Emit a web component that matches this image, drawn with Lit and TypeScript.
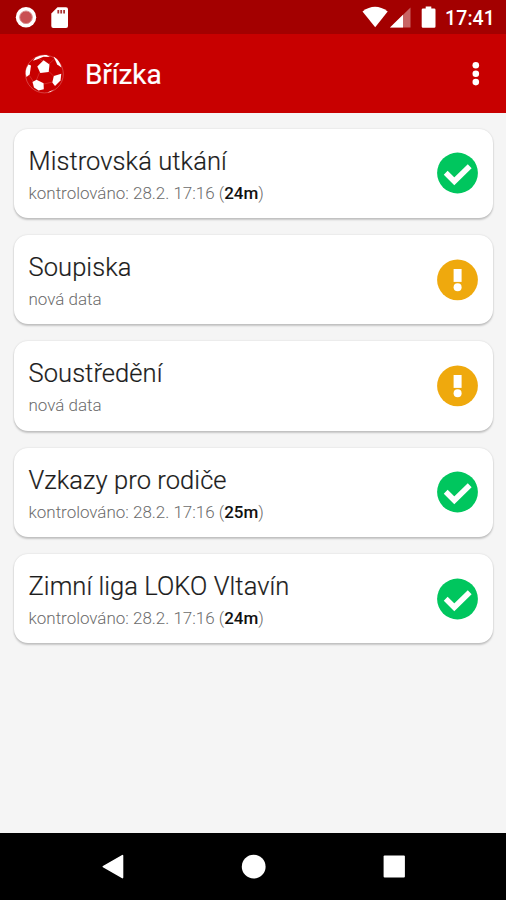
import { LitElement, html, css, svg } from "lit";
import { customElement, property } from "lit/decorators.js";

@customElement("status-bar")
class StatusBar extends LitElement {
  static styles = css`
    :host { display: flex; align-items: center; box-sizing: border-box; height: 34px; background: #a30000; color: #fff; padding-right: 11px; }
    svg { display: block; flex: 1; height: 34px; }
    .time { font: 500 19.5px/34px Roboto, sans-serif; letter-spacing: 0.1px; padding-top: 3px; }
  `;
  render() {
    return html`
      <svg viewBox="0 0 445 34" preserveAspectRatio="xMinYMin meet" fill="#fff">
        <circle cx="26" cy="17.3" r="10.2" />
        <circle cx="26" cy="17.3" r="6.3" fill="#c94f52" stroke="#dc8f90" stroke-width="1" />
        <path d="M57.5 7.3H66a2 2 0 0 1 2 2V26a2 2 0 0 1-2 2H53.3a2 2 0 0 1-2-2V13.5Z" />
        <path d="M57.4 10h1.8v3.6h-1.8zM60.3 10h1.8v3.6h-1.8zM63.2 10H65v3.6h-1.8z" fill="#a33" />
        <path d="M362.5 11.5Q375 2.2 387.7 11.5L375.2 27.3Z" />
        <path d="M410.5 7.5V27.5H390Z" fill="#c86464" />
        <path d="M403 14.8V27.5H390Z" />
        <path d="M425.7 6.5h5.6v2h2.9a1.3 1.3 0 0 1 1.3 1.3v16.6a1.3 1.3 0 0 1-1.3 1.3h-11.2a1.3 1.3 0 0 1-1.3-1.3V9.8A1.3 1.3 0 0 1 423 8.5h2.7z" />
      </svg>
      <span class="time">17:41</span>
    `;
  }
}

@customElement("app-header")
class AppHeader extends LitElement {
  @property() heading = "";
  static styles = css`
    :host { display: flex; align-items: center; box-sizing: border-box; height: 79px; background: #c80000; color: #fff; padding: 0 24px; }
    .ball { width: 40px; height: 40px; display: block; }
    .title { flex: 1; margin: 2px 0 0 21px; font: 400 28px/34px Roboto, sans-serif; letter-spacing: -0.1px; -webkit-text-stroke: 0.2px #fff; }
    .more { width: 12px; height: 26px; display: block; }
  `;
  render() {
    return html`
      <svg class="ball" viewBox="24 54 40 40">
        <circle cx="44.4" cy="74" r="18.9" fill="none" stroke="#e06a6a" stroke-width=".6" />
        <path d="M43.5 61.5L37.5 58M49 64L54.5 59M49 71.5L53.500 76M39.500 72.500L36.500 80M29.500 75.500L33.500 82M44 84L52.500 82" fill="none" stroke="#d84444" stroke-width=".6" />
        <g fill="#fff">
          <path d="M43.6 60.3L49.5 64.6 48.7 72 40.3 73 37.3 66.5Z" />
          <path d="M35.5 57.6Q40 54.5 46.5 55L50 57 43.5 56.7 37.5 59.2 33 60.800Z" />
          <path d="M53.5 56.5Q59.5 60 61.500 67.500L57.200 64.500Z" />
          <path d="M28.500 64.500L31 65.500 29.700 74.500 26.500 77Q24.200 70.500 28.500 64.500Z" />
          <path d="M53.800 76L61.300 73.800 60.500 80.500 55 86 52.300 82.500Z" />
          <path d="M32.500 82L36.500 79.800 43.600 83.300 43.800 89.300 38.500 90.500 34 87.500Z" />
          <path d="M47.500 92.500L54 89.500 50.500 92Z" />
        </g>
      </svg>
      <span class="title">${this.heading}</span>
      <svg class="more" viewBox="0 0 12 26" fill="#fff">
        <circle cx="5.800" cy="4.300" r="3.300" /><circle cx="5.800" cy="12.700" r="3.300" /><circle cx="5.800" cy="21.100" r="3.300" />
      </svg>
    `;
  }
}

@customElement("status-icon")
class StatusIcon extends LitElement {
  @property() kind: "ok" | "new" = "ok";
  static styles = css`
    :host, svg { display: block; width: 42px; height: 42px; }
  `;
  render() {
    return html`<svg viewBox="0 0 42 42">
      ${this.kind === "ok"
        ? svg`<circle cx="20.500" cy="21" r="20.400" fill="#00c65e" /><path d="M8.700 20.800L17.300 29.300 32.700 14.200" fill="none" stroke="#fff" stroke-width="5.500" />`
        : svg`<circle cx="20.500" cy="20.800" r="20.400" fill="#efa90d" /><path d="M16.600 10h8v12.900h-8z" fill="#fff" /><circle cx="20.600" cy="28.200" r="4" fill="#fff" />`}
    </svg>`;
  }
}

@customElement("sheet-card")
class SheetCard extends LitElement {
  @property() name = "";
  @property() note = "";
  @property() age = "";
  static styles = css`
    :host { display: flex; align-items: center; box-sizing: border-box; height: 89.4px; padding: 0 14px 0 14.5px; border-radius: 14px; background: #fff;
      box-shadow: 0 2px 2px rgba(0,0,0,.19), 0 0 2px rgba(0,0,0,.14); }
    .text { flex: 1; padding-top: 2px; font-family: Roboto, sans-serif; white-space: nowrap; }
    .name { font-size: 25.5px; line-height: 34px; font-weight: 300; color: #1c1c1c; letter-spacing: 0.07px; -webkit-text-stroke: 0.2px #1c1c1c; }
    .note { font-size: 17px; line-height: 24px; margin-top: 3px; font-weight: 300; color: #6c6c6c; letter-spacing: -0.02px; }
    b { font-weight: 500; color: #111; }
  `;
  render() {
    return html`
      <div class="text">
        <div class="name">${this.name}</div>
        <div class="note">${this.note}${this.age ? html` (<b>${this.age}</b>)` : ""}</div>
      </div>
      <status-icon .kind=${this.age ? "ok" : "new"}></status-icon>
    `;
  }
}

@customElement("nav-bar")
class NavBar extends LitElement {
  static styles = css`
    :host { display: block; height: 67px; background: #000; }
    svg { display: block; width: 506px; height: 67px; }
  `;
  render() {
    return html`<svg viewBox="0 0 506 67" fill="#fff">
      <path d="M103.300 33.600L122.500 22.600V44.600Z" stroke="#fff" stroke-width="1.600" stroke-linejoin="round" />
      <circle cx="253.700" cy="33.700" r="11.900" />
      <rect x="383.600" y="22.600" width="21.300" height="22" rx="1" />
    </svg>`;
  }
}

const sheets = [
  { name: "Mistrovská utkání", note: "kontrolováno: 28.2. 17:16", age: "24m" },
  { name: "Soupiska", note: "nová data", age: "" },
  { name: "Soustředění", note: "nová data", age: "" },
  { name: "Vzkazy pro rodiče", note: "kontrolováno: 28.2. 17:16", age: "25m" },
  { name: "Zimní liga LOKO Vltavín", note: "kontrolováno: 28.2. 17:16", age: "24m" },
];

@customElement("app-root")
class AppRoot extends LitElement {
  static styles = css`
    :host { display: flex; flex-direction: column; width: 506px; height: 900px; background: #f5f5f5; overflow: hidden; }
    main { flex: 1; display: flex; flex-direction: column; gap: 17px; padding: 15.5px 13px 0 14px; }
  `;
  render() {
    return html`
      <status-bar></status-bar>
      <app-header heading="Břízka"></app-header>
      <main>${sheets.map((s) => html`<sheet-card .name=${s.name} .note=${s.note} .age=${s.age}></sheet-card>`)}</main>
      <nav-bar></nav-bar>
    `;
  }
}
